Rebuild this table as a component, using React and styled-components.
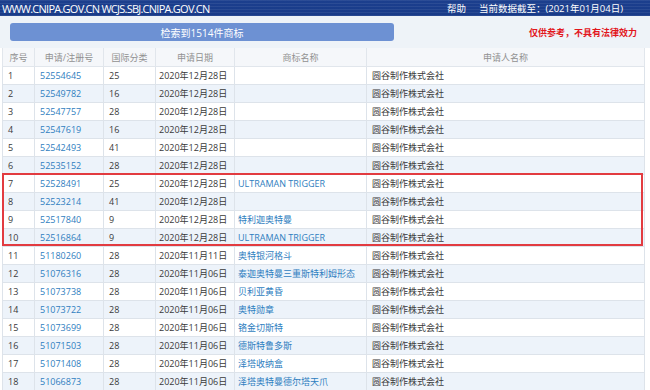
import React from "react";
import styled, { createGlobalStyle } from "styled-components";

const Global = createGlobalStyle`
  html, body { margin: 0; padding: 0; background: #ffffff; }
  body { font-family: "Open Sans", "Noto Sans CJK SC", sans-serif; }
`;

const Page = styled.div`
  width: 650px;
  height: 390px;
  overflow: hidden;
  background: #ffffff;
`;

const TopBar = styled.div`
  height: 16px;
  display: flex;
  align-items: center;
  justify-content: space-between;
  padding: 0 27px 0 2px;
  background:
    repeating-linear-gradient(180deg, rgba(255,255,255,0.07) 0 1px, rgba(0,0,0,0) 1px 3px),
    linear-gradient(180deg, #1c3f8e 0%, #183a88 100%);
  color: #ffffff;
`;

const Site = styled.span`
  font-size: 11px;
  letter-spacing: -0.75px;
  white-space: nowrap;
`;

const TopLinks = styled.div`
  display: flex;
  gap: 13px;
  font-size: 9.5px;
  white-space: nowrap;
`;

const InfoBar = styled.div`
  height: 32px;
  display: flex;
  align-items: center;
  justify-content: space-between;
  padding: 0 13px 0 10px;
  background: #eef3f8;
`;

const CountButton = styled.div`
  width: 384px;
  height: 18px;
  border-radius: 3px;
  background: #6d91d3;
  color: #ffffff;
  font-size: 10px;
  display: flex;
  align-items: center;
  justify-content: center;
`;

const Note = styled.span`
  color: #e2161c;
  font-size: 9px;
  font-weight: 700;
  white-space: nowrap;
`;

const TableWrap = styled.div`
  position: relative;
  margin-left: 2px;
  width: 642px;
`;

const Table = styled.table`
  width: 642px;
  border-collapse: collapse;
  table-layout: fixed;
  font-size: 9px;
`;

const Th = styled.th`
  height: 18px;
  padding: 0;
  background: #f5f7fa;
  color: #919191;
  font-weight: 400;
  text-align: center;
  border: 1px solid #e1e6ec;
  border-top: none;
`;

const Tr = styled.tr`
  background: ${(p) => (p.$alt ? "#edf3fa" : "#ffffff")};
`;

const Td = styled.td`
  height: 17px;
  padding: 0 0 0 ${(p) => p.$pad || 5}px;
  border: 1px solid #dde3ea;
  color: ${(p) => (p.$link ? "#2f7ec0" : "#3a3a3a")};
  white-space: nowrap;
  overflow: hidden;
  line-height: 17px;
`;

const Highlight = styled.div`
  position: absolute;
  left: 0;
  top: 125px;
  width: 641px;
  height: 73px;
  box-sizing: border-box;
  border: 2px solid #e23b40;
  pointer-events: none;
`;

const rows = [
  ["1", "52554645", "25", "2020年12月28日", ""],
  ["2", "52549782", "16", "2020年12月28日", ""],
  ["3", "52547757", "28", "2020年12月28日", ""],
  ["4", "52547619", "16", "2020年12月28日", ""],
  ["5", "52542493", "41", "2020年12月28日", ""],
  ["6", "52535152", "28", "2020年12月28日", ""],
  ["7", "52528491", "25", "2020年12月28日", "ULTRAMAN TRIGGER"],
  ["8", "52523214", "41", "2020年12月28日", ""],
  ["9", "52517840", "9", "2020年12月28日", "特利迦奥特曼"],
  ["10", "52516864", "9", "2020年12月28日", "ULTRAMAN TRIGGER"],
  ["11", "51180260", "28", "2020年11月11日", "奥特银河格斗"],
  ["12", "51076316", "28", "2020年11月06日", "泰迦奥特曼三重斯特利姆形态"],
  ["13", "51073738", "28", "2020年11月06日", "贝利亚黄昏"],
  ["14", "51073722", "28", "2020年11月06日", "奥特勋章"],
  ["15", "51073699", "28", "2020年11月06日", "铬金切斯特"],
  ["16", "51071503", "28", "2020年11月06日", "德斯特鲁多斯"],
  ["17", "51071408", "28", "2020年11月06日", "泽塔收纳盒"],
  ["18", "51066873", "28", "2020年11月06日", "泽塔奥特曼德尔塔天爪"],
];

export default function App() {
  return (
    <Page>
      <Global />
      <TopBar>
        <Site>WWW.CNIPA.GOV.CN WCJS.SBJ.CNIPA.GOV.CN</Site>
        <TopLinks>
          <span>帮助</span>
          <span>当前数据截至：(2021年01月04日)</span>
        </TopLinks>
      </TopBar>
      <InfoBar>
        <CountButton>检索到1514件商标</CountButton>
        <Note>仅供参考，不具有法律效力</Note>
      </InfoBar>
      <TableWrap>
        <Table>
          <colgroup>
            <col style={{ width: 32 }} />
            <col style={{ width: 69 }} />
            <col style={{ width: 52 }} />
            <col style={{ width: 79 }} />
            <col style={{ width: 132 }} />
            <col style={{ width: 278 }} />
          </colgroup>
          <thead>
            <tr>
              <Th>序号</Th>
              <Th>申请/注册号</Th>
              <Th>国际分类</Th>
              <Th>申请日期</Th>
              <Th>商标名称</Th>
              <Th>申请人名称</Th>
            </tr>
          </thead>
          <tbody>
            {rows.map((r, i) => (
              <Tr key={r[0]} $alt={i % 2 === 1}>
                <Td>{r[0]}</Td>
                <Td $link>{r[1]}</Td>
                <Td>{r[2]}</Td>
                <Td $pad={3}>{r[3]}</Td>
                <Td $link $pad={3}>{r[4]}</Td>
                <Td>圆谷制作株式会社</Td>
              </Tr>
            ))}
          </tbody>
        </Table>
        <Highlight />
      </TableWrap>
    </Page>
  );
}
